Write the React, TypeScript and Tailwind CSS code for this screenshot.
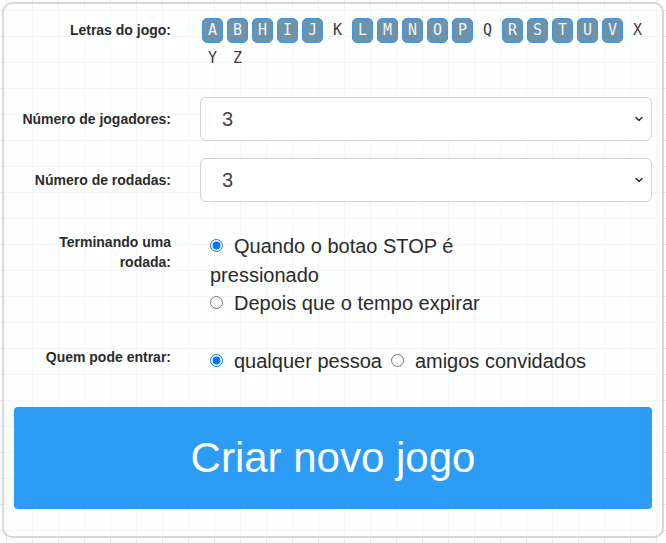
import { ChevronDown } from "lucide-react";

const letters = [
  { l: "A", on: true },
  { l: "B", on: true },
  { l: "H", on: true },
  { l: "I", on: true },
  { l: "J", on: true },
  { l: "K", on: false },
  { l: "L", on: true },
  { l: "M", on: true },
  { l: "N", on: true },
  { l: "O", on: true },
  { l: "P", on: true },
  { l: "Q", on: false },
  { l: "R", on: true },
  { l: "S", on: true },
  { l: "T", on: true },
  { l: "U", on: true },
  { l: "V", on: true },
  { l: "X", on: false },
  { l: "Y", on: false },
  { l: "Z", on: false },
];

function Label({ children }: { children: React.ReactNode }) {
  return (
    <div className="w-[157px] shrink-0 text-right text-[14px] font-bold leading-[20px] text-[#2b2b2b]">
      {children}
    </div>
  );
}

function Select({ value }: { value: string }) {
  return (
    <div className="relative h-[44px] flex-1 rounded-[6px] border border-[#ced4da] bg-white">
      <div className="pl-[21px] text-[20px] leading-[42px] text-[#444]">{value}</div>
      <ChevronDown
        className="absolute right-[6px] top-[15px] text-[#333]"
        size={12}
        strokeWidth={3}
      />
    </div>
  );
}

export default function App() {
  return (
    <div
      className="min-h-[543px] bg-[#fdfefe] bg-[linear-gradient(#e1ecf1_1px,transparent_1px),linear-gradient(90deg,#e1ecf1_1px,transparent_1px)] bg-[size:26px_26px] bg-[position:6px_10px] p-[2px]"
      style={{ fontFamily: '"Liberation Sans", Arial, sans-serif' }}
    >
      <div className="h-[536px] rounded-[10px] border-2 border-[#d7d7d7] bg-white/60 px-[10px] pt-[14px]">
        {/* letras */}
        <div className="flex items-start">
          <div className="w-[157px] shrink-0 text-right text-[14px] font-bold leading-[25px] text-[#2b2b2b]">
            Letras do jogo:
          </div>
          <div className="ml-[31px] flex flex-1 flex-wrap gap-x-[4px] gap-y-[3px] font-['DejaVu_Sans_Mono',monospace] text-[15px]">
            {letters.map((x) => (
              <span
                key={x.l}
                className={
                  x.on
                    ? "flex h-[25px] w-[21px] items-center justify-center rounded-[5px] border border-[#3a95ef] bg-[#6c93a9] text-[#eef4f7]"
                    : "flex h-[25px] w-[21px] items-center justify-center text-[#3a3a3a]"
                }
              >
                {x.l}
              </span>
            ))}
          </div>
        </div>

        {/* jogadores */}
        <div className="mt-[26px] flex items-center">
          <div className="w-[157px] shrink-0 text-right text-[14px] font-bold text-[#2b2b2b]">
            Número de jogadores:
          </div>
          <div className="ml-[29px] flex flex-1">
            <Select value="3" />
          </div>
        </div>

        {/* rodadas */}
        <div className="mt-[17px] flex items-center">
          <div className="w-[157px] shrink-0 text-right text-[14px] font-bold text-[#2b2b2b]">
            Número de rodadas:
          </div>
          <div className="ml-[29px] flex flex-1">
            <Select value="3" />
          </div>
        </div>

        {/* terminando */}
        <div className="mt-[30px] flex items-start">
          <Label>
            Terminando uma
            <br />
            rodada:
          </Label>
          <div className="ml-[39px] w-[330px] text-[20px] leading-[28.5px] text-[#2a2a2a]">
            <label className="block">
              <input
                type="radio"
                name="fim"
                defaultChecked
                className="m-0 mr-[11px] h-[13px] w-[13px] align-[1px]"
              />
              Quando o botao STOP é pressionado
            </label>
            <label className="block">
              <input
                type="radio"
                name="fim"
                className="m-0 mr-[11px] h-[13px] w-[13px] align-[1px]"
              />
              Depois que o tempo expirar
            </label>
          </div>
        </div>

        {/* quem */}
        <div className="mt-[29px] flex items-start">
          <Label>Quem pode entrar:</Label>
          <div className="ml-[39px] text-[20px] leading-[28px] text-[#2a2a2a]">
            <label>
              <input
                type="radio"
                name="quem"
                defaultChecked
                className="m-0 mr-[11px] h-[13px] w-[13px] align-[1px]"
              />
              qualquer pessoa
            </label>
            <label className="ml-[9px]">
              <input
                type="radio"
                name="quem"
                className="m-0 mr-[11px] h-[13px] w-[13px] align-[1px]"
              />
              amigos convidados
            </label>
          </div>
        </div>

        <button className="mt-[32px] flex h-[102px] w-full items-center justify-center rounded-[4px] bg-[#2d9cf5] text-[42px] text-white">
          Criar novo jogo
        </button>
      </div>
    </div>
  );
}
